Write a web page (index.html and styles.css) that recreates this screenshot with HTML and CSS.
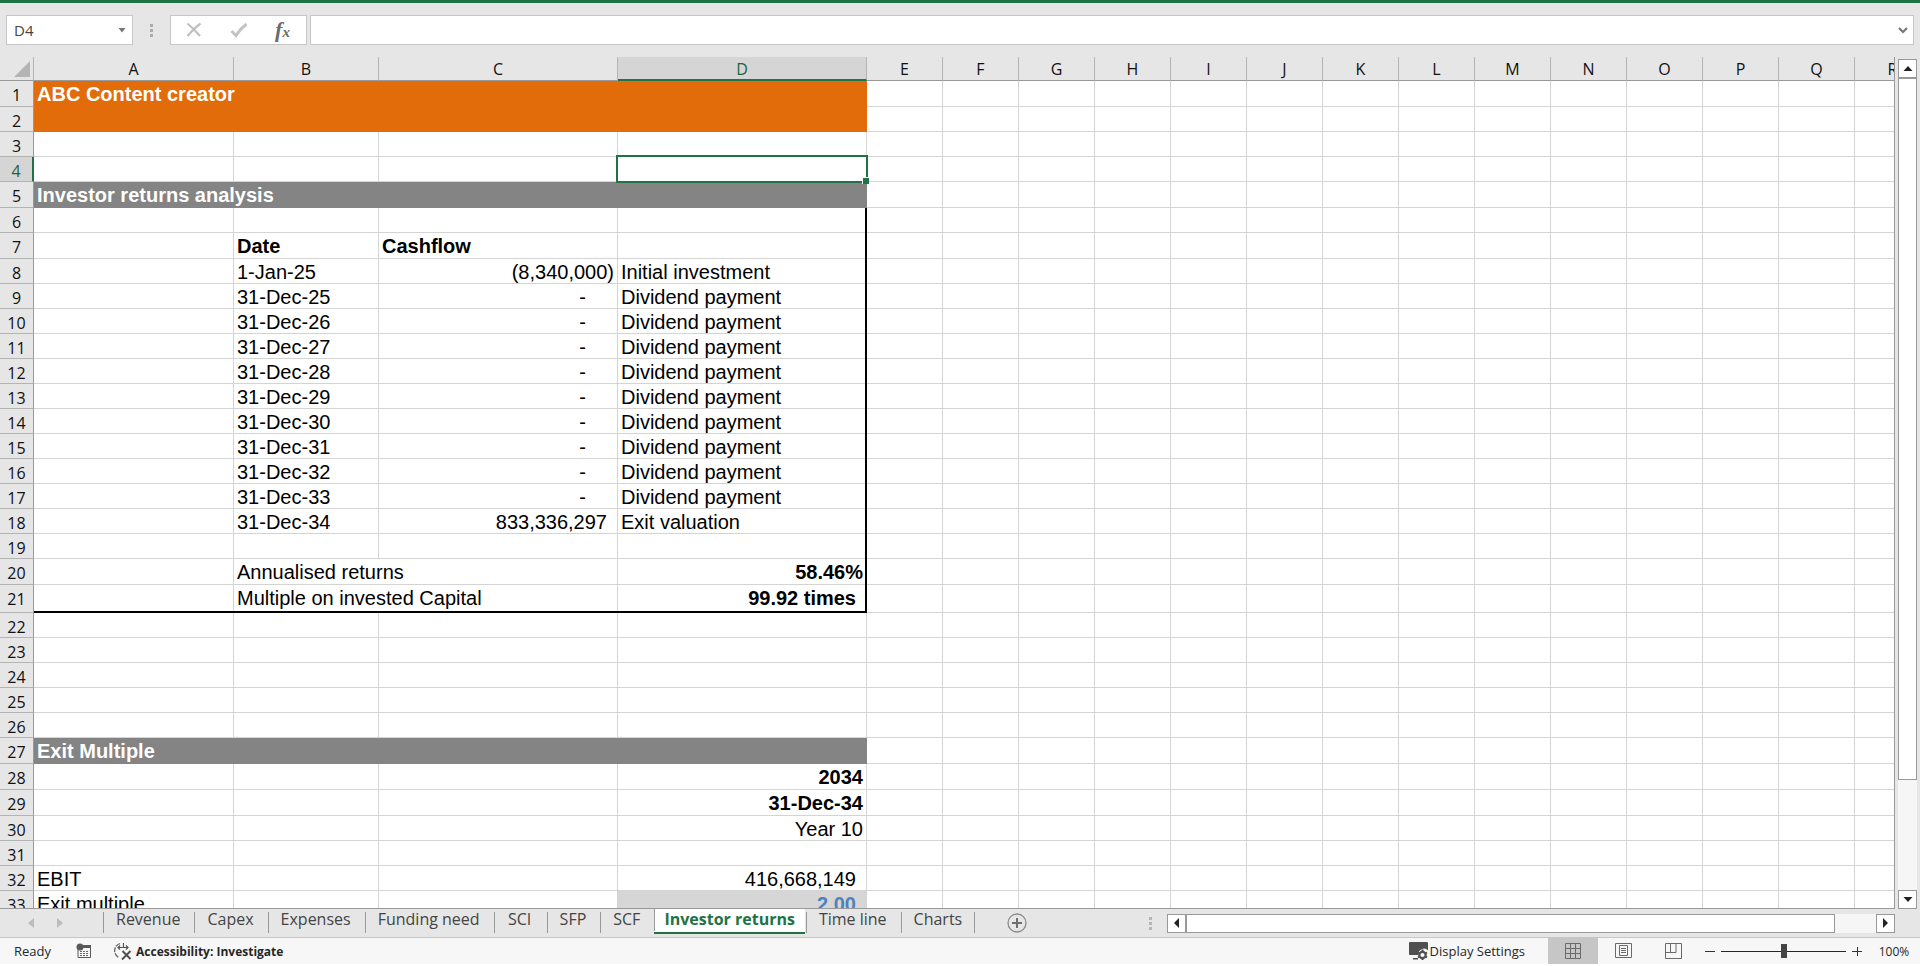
FILE: index.html
```html
<!DOCTYPE html>
<html lang="en">
<head>
<meta charset="utf-8">
<title>Investor returns</title>
<link rel="stylesheet" href="styles.css">
</head>
<body>
<div class="ribbon-edge"></div>
<header class="formula-row">
  <div class="name-box">
    <input class="name-input" type="text" value="D4" aria-label="Name box">
    <button class="name-drop" type="button" aria-label="Show names"><svg width="8" height="5"><path d="M0.500 0h7L4 4.500z" fill="#777"/></svg></button>
  </div>
  <svg class="grip" width="3" height="13"><path d="M0 0h3v3H0zM0 5h3v3H0zM0 10h3v3H0z" fill="#ababab"/></svg>
  <div class="fx-box">
    <button type="button" aria-label="Cancel"><svg width="16" height="16" viewBox="0 0 16 16"><path d="M1.500 1.500Q8 7 14 14M14.500 1.500Q7 7 1.500 14" fill="none" stroke="#c1c1c1" stroke-width="2.200"/></svg></button>
    <button type="button" aria-label="Enter"><svg width="18" height="16" viewBox="0 0 18 16"><path d="M1.500 9l4.500 4.500Q10 7 16.500 2" fill="none" stroke="#c4c4c4" stroke-width="3"/></svg></button>
    <button class="fx" type="button" aria-label="Insert function"><i>f</i><i class="fx-x">x</i></button>
  </div>
  <div class="formula-box">
    <input class="formula-input" type="text" aria-label="Formula bar">
    <button class="expand" type="button" aria-label="Expand formula bar"><svg width="10" height="7"><path d="M1 1l4 4 4-4" fill="none" stroke="#777" stroke-width="2.200"/></svg></button>
  </div>
</header>

<main class="sheet-area">
  <div class="sheet">
    <table class="grid">
      <colgroup><col class="w-head"><col class="w-a"><col class="w-b"><col class="w-c"><col class="w-d"><col span="14" class="w-std"></colgroup>
      <thead>
        <tr><th class="corner"><svg width="16" height="16"><path d="M16 0v16H0z" fill="#b4b4b4"/></svg></th><th>A</th><th>B</th><th>C</th><th class="picked">D</th><th>E</th><th>F</th><th>G</th><th>H</th><th>I</th><th>J</th><th>K</th><th>L</th><th>M</th><th>N</th><th>O</th><th>P</th><th>Q</th><th>R</th></tr>
      </thead>
      <tbody>
        <tr class="mid"><th>1<td colspan="4" class="title">ABC Content creator<td><td><td><td><td><td><td><td><td><td><td><td><td><td>
        <tr><th>2<td colspan="4" class="title"><td><td><td><td><td><td><td><td><td><td><td><td><td><td>
        <tr><th>3<td><td><td><td><td><td><td><td><td><td><td><td><td><td><td><td><td><td>
        <tr><th class="picked">4<td><td><td><td class="active"><div class="cursor"></div><td><td><td><td><td><td><td><td><td><td><td><td><td><td>
        <tr class="mid"><th>5<td colspan="4" class="band">Investor returns analysis<td><td><td><td><td><td><td><td><td><td><td><td><td><td>
        <tr><th>6<td><td><td><td class="edge"><td><td><td><td><td><td><td><td><td><td><td><td><td><td>
        <tr class="mid"><th>7<td><td class="b">Date<td class="b">Cashflow<td class="edge"><td><td><td><td><td><td><td><td><td><td><td><td><td><td>
        <tr><th>8<td><td>1-Jan-25<td class="num">(8,340,000)<td class="edge">Initial investment<td><td><td><td><td><td><td><td><td><td><td><td><td><td>
        <tr><th>9<td><td>31-Dec-25<td class="num dash">-<td class="edge">Dividend payment<td><td><td><td><td><td><td><td><td><td><td><td><td><td>
        <tr><th>10<td><td>31-Dec-26<td class="num dash">-<td class="edge">Dividend payment<td><td><td><td><td><td><td><td><td><td><td><td><td><td>
        <tr><th>11<td><td>31-Dec-27<td class="num dash">-<td class="edge">Dividend payment<td><td><td><td><td><td><td><td><td><td><td><td><td><td>
        <tr><th>12<td><td>31-Dec-28<td class="num dash">-<td class="edge">Dividend payment<td><td><td><td><td><td><td><td><td><td><td><td><td><td>
        <tr><th>13<td><td>31-Dec-29<td class="num dash">-<td class="edge">Dividend payment<td><td><td><td><td><td><td><td><td><td><td><td><td><td>
        <tr><th>14<td><td>31-Dec-30<td class="num dash">-<td class="edge">Dividend payment<td><td><td><td><td><td><td><td><td><td><td><td><td><td>
        <tr><th>15<td><td>31-Dec-31<td class="num dash">-<td class="edge">Dividend payment<td><td><td><td><td><td><td><td><td><td><td><td><td><td>
        <tr><th>16<td><td>31-Dec-32<td class="num dash">-<td class="edge">Dividend payment<td><td><td><td><td><td><td><td><td><td><td><td><td><td>
        <tr><th>17<td><td>31-Dec-33<td class="num dash">-<td class="edge">Dividend payment<td><td><td><td><td><td><td><td><td><td><td><td><td><td>
        <tr><th>18<td><td>31-Dec-34<td class="num gap">833,336,297<td class="edge">Exit valuation<td><td><td><td><td><td><td><td><td><td><td><td><td><td>
        <tr><th>19<td><td><td><td class="edge"><td><td><td><td><td><td><td><td><td><td><td><td><td><td>
        <tr class="mid"><th>20<td><td colspan="2">Annualised returns<td class="num b edge">58.46%<td><td><td><td><td><td><td><td><td><td><td><td><td><td>
        <tr class="tall"><th>21<td class="floor"><td class="floor" colspan="2">Multiple on invested Capital<td class="num b gap edge floor">99.92 times<td><td><td><td><td><td><td><td><td><td><td><td><td><td>
        <tr><th>22<td><td><td><td><td><td><td><td><td><td><td><td><td><td><td><td><td><td>
        <tr><th>23<td><td><td><td><td><td><td><td><td><td><td><td><td><td><td><td><td><td>
        <tr><th>24<td><td><td><td><td><td><td><td><td><td><td><td><td><td><td><td><td><td>
        <tr><th>25<td><td><td><td><td><td><td><td><td><td><td><td><td><td><td><td><td><td>
        <tr><th>26<td><td><td><td><td><td><td><td><td><td><td><td><td><td><td><td><td><td>
        <tr class="mid"><th>27<td colspan="4" class="band">Exit Multiple<td><td><td><td><td><td><td><td><td><td><td><td><td><td>
        <tr class="mid"><th>28<td><td><td><td class="num b">2034<td><td><td><td><td><td><td><td><td><td><td><td><td><td>
        <tr class="mid"><th>29<td><td><td><td class="num b">31-Dec-34<td><td><td><td><td><td><td><td><td><td><td><td><td><td>
        <tr><th>30<td><td><td><td class="num">Year 10<td><td><td><td><td><td><td><td><td><td><td><td><td><td>
        <tr><th>31<td><td><td><td><td><td><td><td><td><td><td><td><td><td><td><td><td><td>
        <tr><th>32<td>EBIT<td><td><td class="num gap">416,668,149<td><td><td><td><td><td><td><td><td><td><td><td><td><td>
        <tr><th>33<td>Exit multiple<td><td><td class="num b gap input-cell">2.00<td><td><td><td><td><td><td><td><td><td><td><td><td><td>
      </tbody>
    </table>
  </div>
  <div class="vscroll">
    <button type="button" aria-label="Scroll up"><svg width="10" height="5"><path d="M0.500 5L5 0l4.500 5z" fill="#222"/></svg></button>
    <div class="vtrack"><div class="vthumb"></div></div>
    <button type="button" aria-label="Scroll down"><svg width="10" height="5"><path d="M0.500 0L5 5l4.500-5z" fill="#222"/></svg></button>
  </div>
</main>

<nav class="tab-bar">
  <div class="tab-nav">
    <button type="button" aria-label="Previous sheet"><svg width="6" height="10"><path d="M6 0v10L0 5z" fill="#bcbcbc"/></svg></button>
    <button type="button" aria-label="Next sheet"><svg width="6" height="10"><path d="M0 0v10l6-5z" fill="#bcbcbc"/></svg></button>
  </div>
  <div class="tabs">
    <button type="button" class="tab">Revenue</button>
    <button type="button" class="tab">Capex</button>
    <button type="button" class="tab">Expenses</button>
    <button type="button" class="tab">Funding need</button>
    <button type="button" class="tab">SCI</button>
    <button type="button" class="tab">SFP</button>
    <button type="button" class="tab">SCF</button>
    <button type="button" class="tab current">Investor returns</button>
    <button type="button" class="tab">Time line</button>
    <button type="button" class="tab">Charts</button>
  </div>
  <button type="button" class="add-sheet" aria-label="New sheet"><svg width="20" height="20"><circle cx="10" cy="10" r="9" fill="none" stroke="#8a8a8a" stroke-width="1.300"/><path d="M5 10h10M10 5v10" stroke="#6e6e6e" stroke-width="2"/></svg></button>
  <div class="hscroll">
    <svg class="grip" width="3" height="13"><path d="M0 0h3v3H0zM0 5h3v3H0zM0 10h3v3H0z" fill="#b5b5b5"/></svg>
    <div class="hbar">
      <button type="button" aria-label="Scroll left"><svg width="5" height="10"><path d="M5 0v10L0 5z" fill="#222"/></svg></button>
      <div class="htrack"><div class="hthumb"></div></div>
      <button type="button" aria-label="Scroll right"><svg width="5" height="10"><path d="M0 0v10l5-5z" fill="#222"/></svg></button>
    </div>
  </div>
</nav>

<footer class="status">
  <span class="ready">Ready</span>
  <button type="button" class="macro" aria-label="Record macro"><svg width="16" height="16"><path d="M2 7v7.500h12.500V3H7" fill="none" stroke="#595959"/><path d="M7 2h8v3H7z" fill="#595959"/><circle cx="4" cy="4" r="3.500" fill="#595959"/><path d="M4 8.500h9M4 10.500h9M4 12.500h9" stroke="#666" stroke-dasharray="2 1"/></svg></button>
  <button type="button" class="access"><svg width="20" height="18"><path d="M8 1.500A7.500 7.500 0 0 0 7 15.500" fill="none" stroke="#666" stroke-width="1.300" stroke-dasharray="5 1"/><path d="M6 5.500h10M8 3.500l-2 2 2 2M14 3.500l2 2-2 2M11.500 1v5" fill="none" stroke="#555" stroke-width="1.200"/><path d="M10.500 9l8 8M18.500 9l-8.500 8.500" stroke="#505050" stroke-width="2"/></svg>Accessibility: Investigate</button>
  <div class="status-right">
    <button type="button" class="display"><svg width="20" height="18"><path d="M1 0h17a1 1 0 0 1 1 1v7.500a5.500 5.500 0 0 0-9.500 4.500H1a1 1 0 0 1-1-1V1a1 1 0 0 1 1-1zM4 16h5v1.500H4z" fill="#505050"/><circle cx="13.500" cy="13" r="3.200" fill="none" stroke="#505050" stroke-width="2.200"/><path d="M13.500 7.500v2M13.500 16.500v1.500M9 10.500l1.600 1M18 10.500l-1.600 1M9 15.500l1.600-1M18 15.500l-1.600-1" stroke="#505050" stroke-width="2"/></svg>Display Settings</button>
    <button type="button" class="view on" aria-label="Normal"><svg width="17" height="17"><path d="M.5.5h15v15H.5zM.5 5.500h15M.5 10.500h15M5.500.5v15M10.500.5v15" fill="none" stroke="#6a6a6a"/></svg></button>
    <button type="button" class="view" aria-label="Page layout"><svg width="17" height="16"><path d="M.5.5h16v14H.5zM4.500 2.500h8v10h-8zM6 5.500h5M6 7.500h5M6 9.500h5" fill="none" stroke="#6a6a6a"/></svg></button>
    <button type="button" class="view" aria-label="Page break preview"><svg width="17" height="17"><path d="M.5.5h16v15H.5zM.5 9.500h10.500V.5M5.500.5v9" fill="none" stroke="#6a6a6a"/></svg></button>
    <div class="zoom">
      <button type="button" aria-label="Zoom out"><svg width="10" height="10"><path d="M0 5.500h10" stroke="#333"/></svg></button>
      <input class="slider" type="range" min="0" max="200" value="100" aria-label="Zoom">
      <button type="button" aria-label="Zoom in"><svg width="10" height="10"><path d="M0 5.500h10M5.500 1v9" stroke="#333"/></svg></button>
    </div>
    <button type="button" class="percent">100%</button>
  </div>
</footer>
</body>
</html>
```
FILE: styles.css
```css
* { box-sizing: border-box; }
html, body { height: 100%; margin: 0; }
body {
  display: flex;
  flex-direction: column;
  padding-bottom: 2px;
  background: #fff;
  overflow: hidden;
  font-family: "Open Sans", "Noto Sans", sans-serif;
  font-size: 12px;
  color: #262626;
}
button, input { font: inherit; color: inherit; margin: 0; padding: 0; border: 0; background: none; }
button { display: flex; align-items: center; justify-content: center; white-space: nowrap; }
svg { display: block; flex: none; }

.ribbon-edge { height: 3px; background: #217346; flex: none; }

/* formula bar */
.formula-row {
  display: flex;
  align-items: center;
  flex: none;
  height: 54px;
  padding: 0 6px;
  background: #e6e6e6;
}
.name-box, .fx-box, .formula-box {
  display: flex;
  align-items: center;
  height: 30px;
  background: #fff;
  border: 1px solid #c6c6c6;
}
.name-box { width: 127px; }
.name-input { flex: 1; min-width: 0; padding-left: 7px; font-size: 15px; color: #444; }
.name-drop { width: 20px; height: 28px; }
.grip { margin: 0 17px; }
.fx-box { width: 137px; justify-content: space-around; }
.fx-box button { width: 45px; height: 28px; }
.fx-box .fx { padding-right: 2px; font-family: "Liberation Serif", serif; font-size: 22px; color: #6a6a6a; }
.fx i { font-weight: bold; line-height: 20px; }
.fx .fx-x { font-size: 15px; padding-top: 3px; }
.formula-box { flex: 1; margin-left: 3px; }
.formula-input { flex: 1; height: 28px; font-size: 15px; }
.expand { width: 20px; height: 28px; }

/* grid */
.sheet-area { display: flex; flex: 1; min-height: 0; background: #e6e6e6; }
.sheet { flex: 1; min-width: 0; overflow: hidden; border-right: 1px solid #999; border-bottom: 1px solid #999; }
.grid {
  width: 1931px;
  table-layout: fixed;
  border-collapse: separate;
  border-spacing: 0;
  background: #fff;
}
.w-head { width: 34px; }
.w-a { width: 200px; }
.w-b { width: 145px; }
.w-c { width: 239px; }
.w-d { width: 249px; }
.w-std { width: 76px; }
.grid td {
  height: 25px;
  padding: 2px 3px 0;
  border-right: 1px solid #d4d4d4;
  border-bottom: 1px solid #d4d4d4;
  font-family: "Liberation Sans", Arial, sans-serif;
  font-size: 20px;
  line-height: 22px;
  vertical-align: top;
  white-space: nowrap;
  color: #000;
}
.grid th {
  padding: 4px 0 0;
  background: #e6e6e6;
  border-right: 1px solid #999;
  border-bottom: 1px solid #b4b4b4;
  font-weight: 400;
  font-size: 16px;
  line-height: 20px;
  vertical-align: top;
  color: #111;
}
.grid thead th { height: 24px; padding-top: 2px; border-right-color: #b4b4b4; border-bottom-color: #999; }
.grid thead .corner { padding: 4px 0 0 14px; }
.grid thead .picked { background: #d5d5d5; color: #1d6340; border-bottom: 2px solid #217346; }
.grid tbody .picked { background: #d5d5d5; color: #1d6340; border-right: 2px solid #217346; }
.grid .mid td { height: 26px; }
.grid .tall td { height: 28px; }
.grid .title { background: #e26b0a; border-color: #e26b0a; color: #fff; font-weight: 700; }
.grid .band { background: #848484; border-color: #848484; color: #fff; font-weight: 700; }
.grid .b { font-weight: 700; }
.grid .num { text-align: right; }
.grid .gap { padding-right: 10px; }
.grid .dash { padding-right: 31px; }
.grid .input-cell { background: #d6d6d6; color: #4f81bd; }

/* heavy rules are painted over the gridlines */
.edge, .floor, .active { position: relative; }
.edge::before {
  content: "";
  position: absolute;
  top: 0;
  bottom: -1px;
  right: -1px;
  width: 2px;
  background: #000;
}
.floor::after {
  content: "";
  position: absolute;
  left: 0;
  right: -1px;
  bottom: -1px;
  height: 2px;
  background: #000;
}
.cursor { position: absolute; inset: -2px; border: 2px solid #217346; }
.cursor::after {
  content: "";
  position: absolute;
  right: -3px;
  bottom: -3px;
  width: 6px;
  height: 6px;
  background: #217346;
  border: solid #fff;
  border-width: 1px 0 0 1px;
}

/* scroll bars */
.vscroll { display: flex; flex-direction: column; width: 19px; margin: 2px 3px 0 3px; background: #f6f6f6; }
.vscroll button, .hbar button { flex: none; width: 19px; height: 19px; background: #fff; border: 1px solid #999; }
.vtrack { flex: 1; }
.vthumb { height: 86.5%; background: #fff; border: 1px solid #999; }
.hscroll { display: flex; align-items: center; flex: none; width: 41%; margin-left: auto; padding-right: 25px; }
.hscroll .grip { margin-left: 16px; margin-right: 15px; }
.hbar { display: flex; flex: 1; background: #f6f6f6; }
.htrack { flex: 1; }
.hthumb { width: 94%; height: 19px; background: #fff; border: 1px solid #999; }

/* sheet tabs */
.tab-bar { display: flex; flex: none; height: 29px; background: #e6e6e6; border-bottom: 1px solid #c6c6c6; }
.tab-nav { display: flex; gap: 23px; width: 103px; padding-left: 28px; }
.tabs { display: flex; gap: 1px; }
.tab { position: relative; min-width: 52px; height: 25px; padding: 0 13px 4px; font-size: 16px; line-height: 19px; color: #444; }
.tab::before, .tab:last-child::after { content: ""; position: absolute; left: 0; top: 3px; bottom: 1px; border-left: 1px solid #999; }
.tab:last-child::after { left: auto; right: 0; }
.current { padding: 0 10px 2px; background: #fff; color: #217346; font-weight: 700; border-bottom: 2px solid #217346; }
.current::before { top: 0; }
.add-sheet { margin-left: 32px; }

/* status bar */
.status { display: flex; align-items: center; flex: none; height: 26px; padding-left: 14px; background: #f7f7f7; font-size: 13px; }
.macro { margin-left: 25px; }
.access { margin-left: 20px; gap: 4px; font-size: 12px; font-weight: 700; }
.status-right { display: flex; align-items: center; height: 100%; margin-left: auto; }
.display { gap: 1px; margin-right: 23px; }
.view { width: 50px; height: 26px; }
.on { background: #c6c6c6; }
.zoom { display: flex; align-items: center; gap: 6px; margin-left: 7px; }
.slider { appearance: none; width: 125px; height: 14px; background: linear-gradient(#262626, #262626) center / 100% 1px no-repeat; }
.slider::-webkit-slider-thumb { appearance: none; width: 6px; height: 14px; background: #444; }
.percent { width: 32px; margin: 0 10px 0 16px; font-size: 12px; }
```
